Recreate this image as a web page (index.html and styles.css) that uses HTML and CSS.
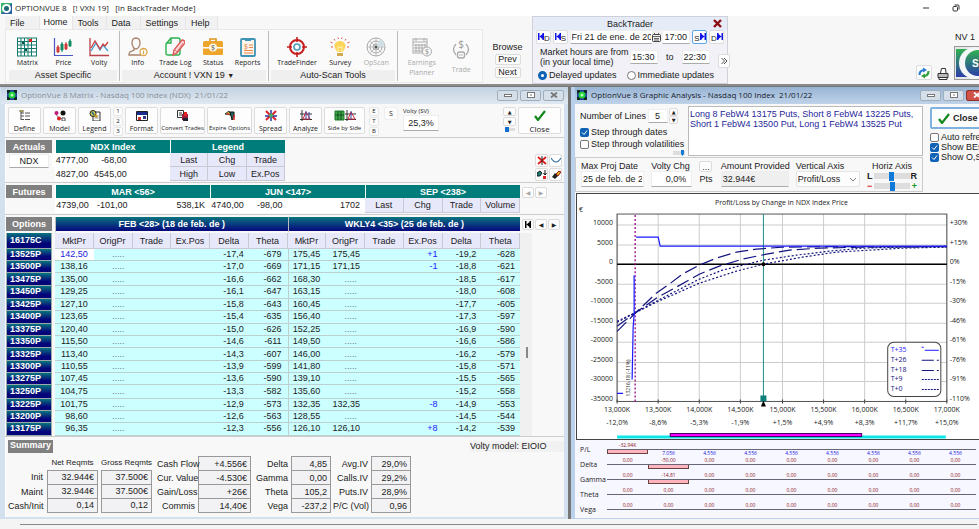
FILE: index.html
```html
<!DOCTYPE html>
<html lang="en">
<head>
  <meta charset="UTF-8">
  <meta name="viewport" content="width=device-width, initial-scale=1.0">
  <title>OPTIONVUE 8</title>
  <link rel="stylesheet" href="styles.css">
</head>
<body>
  <header class="app-title">
    <svg class="app-icon" width="11" height="11" viewBox="0 0 11 11"><rect width="11" height="11" fill="#2c5f9e"/><path d="M0 11V0h11z" fill="#35b36b"/><circle cx="5.500" cy="5.500" r="4.500" fill="#fff"/><circle cx="5.500" cy="5.500" r="2.500" fill="#1e6b74"/></svg>
    <h1>OPTIONVUE 8 &nbsp; [! VXN 19] &nbsp; [In BackTrader Mode]</h1>
    <div class="app-controls">
      <button aria-label="Minimize"><svg width="8" height="8" viewBox="0 0 8 8"><path d="M1 4h6" stroke="#333"/></svg></button>
      <button aria-label="Restore"><svg width="8" height="8" viewBox="0 0 8 8" fill="none" stroke="#333"><rect x="1" y="2.500" width="4.500" height="4.500" rx="1"/><path d="M2.500 1h3.500q1 0 1 1v3.500"/></svg></button>
    </div>
  </header>

  <div class="ribbon">
    <div class="ribbon-main">
      <nav class="tabs">
        <a href="#">File</a>
        <a href="#" class="active">Home</a>
        <a href="#">Tools</a>
        <a href="#">Data</a>
        <a href="#">Settings</a>
        <a href="#">Help</a>
      </nav>
      <div class="groups">
        <section class="group group-asset">
          <div class="tools">
            <button class="tool"><svg width="20" height="20" viewBox="0 0 20 20"><rect x=".5" y="1" width="19" height="18" fill="#fff" stroke="#137a6c"/><path d="M4 1v18M7.500 1v18M11 1v18M14.500 1v18M1 4.500h18M1 8h18M1 11.500h18M1 15h18" stroke="#137a6c"/><path d="M5 5h2v2h-2zM8 12h2v2h-2z" fill="#0b4f46"/><path d="M12 2h3v3h-3z" fill="#d22"/></svg>Matrix</button>
            <button class="tool"><svg width="20" height="20" viewBox="0 0 20 20" fill="none"><path d="M1.500 1v17.500H20" stroke="#4a55c8" stroke-width="1.200"/><path d="M5 8v8M13 5v8" stroke="#d23b35"/><path d="M9 5v10M17 2v8" stroke="#158a63"/><path d="M4 10h2v5h-2zM12 7h2v5h-2z" fill="#d23b35" stroke="#d23b35"/><path d="M8 7h2v6h-2zM16 4h2v5h-2z" fill="#158a63" stroke="#158a63"/></svg>Price</button>
            <button class="tool"><svg width="20" height="20" viewBox="0 0 20 20" fill="none" stroke-width="1.300"><path d="M1 1v17.500H20" stroke="#b94047"/><path d="M2 14l5-8 4 7 3-5 5 6" stroke="#3c9fd8"/><path d="M2 11l4-7 5 8 3-5 2 2 3-4" stroke="#cf3f3f"/></svg>Volty</button>
          </div>
          <h2>Asset Specific</h2>
        </section>
        <section class="group group-account">
          <div class="tools">
            <button class="tool"><svg width="20" height="20" viewBox="0 0 20 20" fill="none" stroke="#a8806a" stroke-width="1.300"><path d="M8 1c-3 0-4 2-4 5s2 6 4 6 4-3 4-6-1-5-4-5z"/><path d="M6 11v2l-4 2q-1 1-1 3h12"/><circle cx="15.500" cy="15" r="3.500" fill="#fff" stroke="#d9a548"/><path d="M15.500 14v3M15.500 12.500v.8" stroke="#d9a548"/></svg>Info</button>
            <button class="tool"><svg width="20" height="20" viewBox="0 0 20 20" fill="none" stroke-width="1.400"><path d="M6 1h7q2 0 2 2v13q0 2-2 2H3q-2 0-2-2V7zM6 1v5H1" stroke="#28b24c"/><path d="M8 18l1-5 8-10q3 0 3 3l-8 10z" fill="#fbd9d9" stroke="#dc5b5b"/><path d="M10 13l2 2 6-9" stroke="#dc5b5b" stroke-width=".8"/></svg>Trade Log</button>
            <button class="tool"><svg width="20" height="20" viewBox="0 0 20 20"><path d="M7 5V2h6v3" fill="none" stroke="#dd951f" stroke-width="1.600"/><rect y="4" width="20" height="14" rx="1.500" fill="#eda52b"/><path d="M0 10h20v1.500H0z" fill="#fff"/><circle cx="10" cy="10.500" r="4" fill="#fff7e0"/><text x="10" y="13" font-size="7" text-anchor="middle" fill="#555">$</text></svg>Status</button>
            <button class="tool"><svg width="20" height="20" viewBox="0 0 20 20" fill="none"><rect x="3" y="2" width="14" height="17" rx="1" fill="#fdf3e8" stroke="#3f93b6" stroke-width="1.800"/><path d="M7 1h6v3H7z" fill="#3f93b6"/><path d="M11 8h4M11 10.500h4M6 13.500h9M6 16h9" stroke="#e58a4b"/><text x="6" y="12" font-size="7" fill="#e07a30">$</text></svg>Reports</button>
          </div>
          <h2>Account ! VXN 19 <small>▼</small></h2>
        </section>
        <section class="group group-scan">
          <div class="tools">
            <button class="tool"><svg width="20" height="20" viewBox="0 0 20 20" fill="none"><circle cx="10" cy="10" r="7" stroke="#c61f1f" stroke-width="2"/><circle cx="10" cy="10" r="3" stroke="#4b9db8" stroke-width="1.600"/><path d="M10 0v5M10 15v5M0 10h5M15 10h5" stroke="#c61f1f" stroke-width="1.600"/></svg>TradeFinder</button>
            <button class="tool"><svg width="20" height="20" viewBox="0 0 20 20" fill="none"><path d="M10 4c-4 0-5.500 3-5.500 5 0 3 2.500 4 2.500 6h6c0-2 2.500-3 2.500-6 0-2-1.500-5-5.500-5z" fill="#fcd45a"/><path d="M8 9l2 2 2-2v6M8 9v6" stroke="#fff2b4"/><path d="M7 16h6v3H7z" fill="#d0a952"/><path d="M4 2l1 1.500M8 .5l.5 1.500M12 .5l-.5 1.500M16 2l-1 1.500M.5 5l2 1M19.500 5l-2 1M1 10h2M17 10h2" stroke="#e4574f"/></svg>Survey</button>
            <button class="tool" disabled><svg width="20" height="20" viewBox="0 0 20 20" fill="none" stroke="#a8a8a8"><circle cx="10" cy="10" r="9"/><circle cx="10" cy="10" r="6"/><circle cx="10" cy="10" r="3"/><path d="M10 1v18M1 10h18M4 4l12 12M16 4L4 16" stroke-width=".6"/><path d="M10 10L14 2q4 2 5 7z" fill="#cfe0e4" stroke="none"/><circle cx="10" cy="10" r="1.500" fill="#555" stroke="none"/></svg>OpScan</button>
          </div>
          <h2>Auto-Scan Tools</h2>
        </section>
        <section class="group group-trade">
          <div class="tools">
            <button class="tool" disabled><svg width="20" height="20" viewBox="0 0 20 20" fill="none" stroke="#aaa"><rect x="1" y="2" width="14" height="14"/><path d="M1 5h14M4 7v8M7 7v8M10 7v8M13 7v5M2 8h12M2 11h12M2 14h10M4 1v3M12 1v3"/><circle cx="15" cy="14.500" r="4.500" fill="#f9f9f9"/><text x="15" y="17" font-size="7" text-anchor="middle" fill="#888" stroke="none">$</text></svg><span>Earnings<br>Planner</span></button>
            <button class="tool tool-low" disabled><svg width="20" height="20" viewBox="0 0 20 20" fill="none" stroke="#aaa" stroke-width="1.300"><path d="M5 5q-5 5 0 11M15 5q5 5 0 11"/><rect x="6.500" y="13" width="7" height="6" rx="2"/><path d="M8 16h4" stroke-width=".8"/><text x="10" y="9" font-size="10" text-anchor="middle" fill="#999" stroke="none">$</text></svg>Trade</button>
          </div>
        </section>
      </div>
    </div>

    <div class="browse">
      <span>Browse</span>
      <button>Prev</button>
      <button>Next</button>
    </div>

    <form class="backtrader">
      <div class="bt-head"><h2>BackTrader</h2><button type="button" aria-label="Close BackTrader"><svg width="9" height="9" viewBox="0 0 9 9"><path d="M1 1l7 7M8 1L1 8" stroke="#8d0d14" stroke-width="2.400"/></svg></button></div>
      <div class="bt-row">
        <button type="button" class="step"><svg width="6" height="7" viewBox="0 0 6 7" fill="#1414e8"><path d="M0 0h1.500v7H0zM4.500 0H6v7H4.500zM1.500 3.500L4.500 1v5z"/></svg><sub>D</sub></button>
        <button type="button" class="step"><svg width="6" height="7" viewBox="0 0 6 7" fill="#1414e8"><path d="M0 0h1.500v7H0zM4.500 0H6v7H4.500zM1.500 3.500L4.500 1v5z"/></svg><sub>S</sub></button>
        <span class="date-field">
          <input class="field" value="Fri 21 de ene. de 2022" aria-label="Date">
          <button type="button" aria-label="Calendar"><svg width="9" height="9" viewBox="0 0 9 9" fill="none" stroke="#444"><rect x=".5" y="1.500" width="8" height="7" rx="1"/><path d="M1 3.500h7M2.500 0v2M6.500 0v2M2 5.500h5M2 7h5" stroke-width=".8"/></svg></button>
        </span>
        <input class="field field-time" value="17:00" aria-label="Time">
        <button type="button" class="step active"><sub>S</sub><svg width="6" height="7" viewBox="0 0 6 7" fill="#1414e8"><path d="M0 0h1.500v7H0zM4.500 0H6v7H4.500zM4.500 3.500L1.500 1v5z"/></svg></button>
        <button type="button" class="step"><sub>D</sub><svg width="6" height="7" viewBox="0 0 6 7" fill="#1414e8"><path d="M0 0h1.500v7H0zM4.500 0H6v7H4.500zM4.500 3.500L1.500 1v5z"/></svg></button>
      </div>
      <div class="bt-hours">
        <p>Market hours are from<br>(in your local time)</p>
        <input class="field field-time" value="15:30" aria-label="Market open">
        <span>to</span>
        <input class="field field-time" value="22:30" aria-label="Market close">
        <button type="button" class="more" aria-label="More"><svg width="7" height="8" viewBox="0 0 7 8" fill="none" stroke="#555"><path d="M.5 1l3 3-3 3M3 1l3 3-3 3"/></svg></button>
      </div>
      <div class="bt-updates">
        <label><input type="radio" name="updates" checked>Delayed updates</label>
        <label><input type="radio" name="updates">Immediate updates</label>
      </div>
    </form>

    <div class="ribbon-right">
      <button class="refresh" aria-label="Refresh"><svg width="12" height="12" viewBox="0 0 12 12" fill="none" stroke-width="2.200"><path d="M1.500 8q0-5 5-5" stroke="#2b7cd0"/><path d="M10.500 4q0 5-5 5" stroke="#33a13b"/><path d="M5 .5l4 2.500-4 2.500z" fill="#2b7cd0"/><path d="M7 6.500L3 9l4 2.500z" fill="#33a13b"/></svg></button>
      <button class="print" aria-label="Print"><svg width="12" height="12" viewBox="0 0 12 12" fill="#fff" stroke="#333"><path d="M3.500 5L4.500.5h4L9 5"/><path d="M1 5.500h10v4H1z" fill="#bbb"/><path d="M2 9.500h8v2H2z"/></svg></button>
      <div class="brand">
        <span>NV 1</span>
        <svg width="36" height="34" viewBox="0 0 36 34"><defs><linearGradient id="brandFill" x2="0" y2="1"><stop offset="0" stop-color="#31b050"/><stop offset="1" stop-color="#2c3ea8"/></linearGradient></defs><rect width="36" height="34" fill="#999"/><rect x="1" y="1" width="35" height="32" fill="#e4e8ea"/><rect x="2" y="3" width="34" height="28" fill="url(#brandFill)"/><circle cx="21" cy="17" r="16" fill="#f3f6f6"/><circle cx="24" cy="17" r="13" fill="url(#brandFill)"/><text x="18" y="21" font-size="10" font-weight="bold" fill="#fff">S</text></svg>
      </div>
    </div>
  </div>

  <main class="desktop">
    <section class="window matrix">
      <header class="window-title">
        <svg class="win-icon" width="10" height="10" viewBox="0 0 10 10"><rect width="10" height="10" fill="#243a9c"/><path d="M0 0h3v3H0zM7 0h3v3H7zM0 7h3v3H0zM7 7h3v3H7z" fill="#0c2a20"/><circle cx="5" cy="5" r="3.500" fill="#1fd03e"/><circle cx="5" cy="5" r="1.500" fill="#b6ffb0"/></svg>
        <h2>OptionVue 8 Matrix - Nasdaq 100 Index (NDX) &nbsp;21/01/22</h2>
        <div class="win-controls">
          <button aria-label="Minimize"><svg width="8" height="6" viewBox="0 0 8 6"><rect x=".5" y="2.500" width="7" height="2" fill="#fff" stroke="#777"/></svg></button>
          <button aria-label="Maximize"><svg width="8" height="6" viewBox="0 0 8 6"><rect x=".5" y=".5" width="7" height="5" fill="#fff" stroke="#777"/><path d="M3 3h2" stroke="#777"/></svg></button>
          <button aria-label="Close"><svg width="8" height="6" viewBox="0 0 8 6"><path d="M1 .5l6 5M7 .5l-6 5" stroke="#777" stroke-width="1.800"/></svg></button>
        </div>
      </header>

      <div class="matrix-tools">
        <button class="mtool"><svg width="12" height="11" viewBox="0 0 12 11" fill="none" stroke="#555"><path d="M2 1v9M2 3h3M2 6h3M2 9.500h3M6 3h5M6 6h5M6 9.500h5"/><path d="M1 0h3v2H1z" fill="#e5d320" stroke="#776"/></svg>Define</button>
        <button class="mtool"><svg width="12" height="11" viewBox="0 0 12 11"><path d="M2 4q3 6 7 4" fill="none" stroke="#777"/><circle cx="2.500" cy="3" r="2" fill="#c2187a"/><circle cx="9" cy="3" r="2.500" fill="#111"/><circle cx="5" cy="8.500" r="2" fill="#d22"/><path d="M8 8h3v3H8z" fill="#fff" stroke="#555"/></svg>Model</button>
        <button class="mtool"><svg width="12" height="11" viewBox="0 0 12 11"><path d="M4 2h7v9H4z" fill="#fff" stroke="#333"/><path d="M5.500 6h4M5.500 8h4" stroke="#888"/><circle cx="4" cy="3.500" r="3" fill="#d8cf4a" stroke="#222"/><path d="M3 2l2 3" stroke="#2a6d90" stroke-width="1.500"/><path d="M6 5l2 2" stroke="#c90" stroke-width="2"/></svg>Legend</button>
        <div class="stack"><button>1</button><button>2</button><button>3</button></div>
        <button class="mtool"><svg width="12" height="11" viewBox="0 0 12 11"><path d="M.5 1.500h11v9H.5z" fill="#fff" stroke="#222"/><path d="M1 2h10v3H1z" fill="#1d2b8c"/><path d="M2 7h3v3H2z" fill="#c33"/><path d="M7 6h3v3H7z" fill="#338"/></svg>Format</button>
        <button class="mtool mtool-wide"><svg width="12" height="11" viewBox="0 0 12 11"><path d="M.5.500h6v7H.5z" fill="#fff" stroke="#333"/><path d="M2 3h3M2 5h3" stroke="#333"/><path d="M5 4h6v6H5z" fill="#9a1f3f"/><path d="M7 2h3v4H7z" fill="#e02424"/><path d="M6 8h5v3H6z" fill="#223"/></svg>Convert Trades</button>
        <button class="mtool mtool-wide"><svg width="12" height="11" viewBox="0 0 12 11"><path d="M1 4l4-3 2 4z" fill="#dcc428" stroke="#333"/><path d="M6 2h4v5L8 10z" fill="#22655d" stroke="#111"/><path d="M10 5v5" stroke="#d22" stroke-width="1.500"/><circle cx="4" cy="4" r="1" fill="#d33"/></svg>Expire Options</button>
        <button class="mtool"><svg width="12" height="11" viewBox="0 0 12 11"><path d="M1 1l4 4M11 1L7 5M1 10l4-4M11 10L7 6" stroke="#d9202c" stroke-width="2"/><path d="M6 0v4M0 6h4M8 6h4M6 7v4" stroke="#25379c" stroke-width="1.500"/><circle cx="6" cy="5.500" r="2" fill="#46ae60"/></svg>Spread</button>
        <button class="mtool"><svg width="12" height="11" viewBox="0 0 12 11" fill="none"><path d="M2 0v11M0 9.500h12M0 4h12" stroke="#333"/><path d="M3 9l3-7 4 7z" stroke="#d5293d"/><path d="M6 1v8M9 2v7" stroke="#3343a6"/></svg>Analyze</button>
        <button class="mtool mtool-side"><svg width="22" height="11" viewBox="0 0 22 11" fill="none"><path d="M1 1h9v9H1z" fill="#40a74a" stroke="#1f7a2c"/><path d="M4 1v9M7 1v9M1 5h9" stroke="#0d4f1a"/><path d="M13 0v11M11 9.500h11M11 4h11" stroke="#333"/><path d="M14 9l3-7 4 7z" stroke="#d5293d"/><path d="M17 1v8" stroke="#3343a6"/></svg>Side by Side</button>
        <div class="stack stack-etb"><button>E</button><button>T</button><button>B</button></div>
        <button class="key-s">S</button>
        <label class="volty">Volty (SV)<input class="field" value="25,3%"></label>
        <div class="spin matrix-spin">
          <button aria-label="Up">▲</button>
          <button aria-label="Down">▼</button>
          <svg width="10" height="5" viewBox="0 0 10 5"><path d="M0 1h10v3H0z" fill="#ddd"/><path d="M0 0h4v5H0z" fill="#0f6fd0"/></svg>
        </div>
        <button class="close"><svg width="12" height="11" viewBox="0 0 12 11" fill="none"><path d="M1 6l3 4 7-9" stroke="#14891d" stroke-width="2.200"/></svg>Close</button>
      </div>

      <div class="row actuals">
        <table class="quotes">
          <colgroup><col class="col-label"><col class="col-gap"></colgroup>
          <thead><tr><th class="tag">Actuals</th><td></td><th colspan="3" class="teal">NDX Index</th><th colspan="3" class="teal">Legend</th></tr></thead>
          <tbody>
            <tr><td rowspan="2" class="top"><button class="field symbol">NDX</button></td><td></td><td>4777,00</td><td>-68,00</td><td class="plain"></td><th class="cap">Last</th><th class="cap">Chg</th><th class="cap">Trade</th></tr>
            <tr><td></td><td>4827,00</td><td>4545,00</td><td class="plain"></td><th class="cap">High</th><th class="cap">Low</th><th class="cap">Ex.Pos</th></tr>
          </tbody>
        </table>
        <div class="icon-pad">
          <button aria-label="Delete"><svg width="10" height="9" viewBox="0 0 10 9"><path d="M1 1l8 7M9 1L1 8" stroke="#e21d1d" stroke-width="1.800"/><path d="M5 0v9" stroke="#222"/></svg></button>
          <button aria-label="Curve"><svg width="10" height="9" viewBox="0 0 10 9"><path d="M0 2q5 8 10 0" fill="none" stroke="#26669c" stroke-width="1.200"/></svg></button>
          <button aria-label="Move"><svg width="10" height="9" viewBox="0 0 10 9"><path d="M0 3l3-2 2 2-2 3H0z" fill="#17766f" stroke="#222"/><path d="M8 0v5M6.500 3l1.500 2 1.500-2" stroke="#111" fill="none"/><path d="M6 6h3v3H6z" fill="#d22"/></svg></button>
          <button aria-label="Clear"><svg width="10" height="9" viewBox="0 0 10 9"><path d="M1 7l3-4 3 3-3 3z" fill="#222"/><path d="M5 4l3-3 2 1-3 4z" fill="#d6b520" stroke="#911"/></svg></button>
        </div>
      </div>

      <div class="row futures">
        <table class="quotes">
          <colgroup><col class="col-label"><col class="col-gap"></colgroup>
          <thead><tr><th class="tag">Futures</th><td></td><th colspan="4" class="teal">MAR &lt;56&gt;</th><th colspan="4" class="teal">JUN &lt;147&gt;</th><th colspan="4" class="teal">SEP &lt;238&gt;</th></tr></thead>
          <tbody><tr><td></td><td></td><td>4739,00</td><td>-101,00</td><td class="plain"></td><td>538,1K</td><td>4740,00</td><td>-98,00</td><td class="plain"></td><td>1702</td><th class="cap">Last</th><th class="cap">Chg</th><th class="cap">Trade</th><th class="cap">Volume</th></tr></tbody>
        </table>
        <div class="pager"><button disabled aria-label="Previous">◀</button><button disabled aria-label="Next">▶</button></div>
      </div>

      <div class="row options">
        <table class="quotes chain">
          <colgroup><col class="col-label"><col class="col-gap"></colgroup>
          <thead>
            <tr><th class="tag">Options</th><td></td><th colspan="6" class="navy">FEB &lt;28&gt; (18 de feb. de )</th><th colspan="6" class="navy">WKLY4 &lt;35&gt; (25 de feb. de )</th></tr>
            <tr class="caps"><th class="strike">16175C</th><td></td><th>MktPr</th><th>OrigPr</th><th>Trade</th><th>Ex.Pos</th><th>Delta</th><th>Theta</th><th>MktPr</th><th>OrigPr</th><th>Trade</th><th>Ex.Pos</th><th>Delta</th><th>Theta</th></tr>
          </thead>
          <tbody id="chainBody"></tbody>
        </table>
        <div class="chain-side">
          <div class="pager"><button aria-label="First"><svg width="6" height="7" viewBox="0 0 6 7"><path d="M0 0h1.500v7H0zM4.500 0H6v7H4.500zM1.500 3.500L4.500 1v5z"/></svg></button><button aria-label="Previous">◀</button><button aria-label="Next">▶</button></div>
          <div class="track"><span></span></div>
        </div>
      </div>

      <div class="summary">
        <div class="summary-head"><h3 class="tag">Summary</h3><span>Volty model: EIOIO</span></div>
        <div class="summary-tables">
          <table class="reqs">
            <tr><td></td><th>Net Reqmts</th><th>Gross Reqmts</th></tr>
            <tr><th>Init</th><td>32.944€</td><td>37.500€</td></tr>
            <tr><th>Maint</th><td>32.944€</td><td>37.500€</td></tr>
            <tr><th>Cash/Init</th><td>0,14</td><td>0,12</td></tr>
          </table>
          <table class="cash">
            <tr><th>Cash Flow</th><td>+4.556€</td></tr>
            <tr><th>Cur. Value</th><td>-4.530€</td></tr>
            <tr><th>Gain/Loss</th><td>+26€</td></tr>
            <tr><th>Commis</th><td>14,40€</td></tr>
          </table>
          <table class="risk">
            <tr><th>Delta</th><td>4,85</td></tr>
            <tr><th>Gamma</th><td>0,00</td></tr>
            <tr><th>Theta</th><td>105,2</td></tr>
            <tr><th>Vega</th><td>-237,2</td></tr>
          </table>
          <table class="risk">
            <tr><th>Avg.IV</th><td>29,0%</td></tr>
            <tr><th>Calls.IV</th><td>29,2%</td></tr>
            <tr><th>Puts.IV</th><td>28,9%</td></tr>
            <tr><th>P/C (Vol)</th><td>0,96</td></tr>
          </table>
        </div>
      </div>
    </section>

    <section class="window analysis">
      <header class="window-title">
        <svg class="win-icon" width="10" height="10" viewBox="0 0 10 10"><rect width="10" height="10" fill="#243a9c"/><path d="M0 0h3v3H0zM7 0h3v3H7zM0 7h3v3H0zM7 7h3v3H7z" fill="#0c2a20"/><circle cx="5" cy="5" r="3.500" fill="#1fd03e"/><circle cx="5" cy="5" r="1.500" fill="#b6ffb0"/></svg>
        <h2>OptionVue 8 Graphic Analysis - Nasdaq 100 Index &nbsp;21/01/22</h2>
        <div class="win-controls">
          <button aria-label="Minimize"><svg width="8" height="6" viewBox="0 0 8 6"><rect x=".5" y="2.500" width="7" height="2" fill="#fff" stroke="#777"/></svg></button>
          <button aria-label="Maximize"><svg width="8" height="6" viewBox="0 0 8 6"><rect x=".5" y=".5" width="7" height="5" fill="#fff" stroke="#777"/><path d="M3 3h2" stroke="#777"/></svg></button>
          <button class="danger" aria-label="Close"><svg width="8" height="6" viewBox="0 0 8 6"><path d="M1 .5l6 5M7 .5l-6 5" stroke="#fff" stroke-width="1.800"/></svg></button>
        </div>
      </header>

      <div class="setup">
        <div class="setup-left">
          <div class="top-row">
            <div class="line-options">
              <div class="lines-row">
                <label for="lineCount">Number of Lines</label>
                <input class="field" id="lineCount" value="5">
                <div class="spin"><button aria-label="More lines">▲</button><button aria-label="Fewer lines">▼</button></div>
              </div>
              <label class="check"><input type="checkbox" checked>Step through dates</label>
              <label class="check"><input type="checkbox">Step through volatilities</label>
              <svg class="mini-slider" width="12" height="6" viewBox="0 0 12 6"><path d="M0 1h12v4H0z" fill="#ddd"/><path d="M8 0h3v4L9.500 6 8 4z" fill="#0f7ad8"/></svg>
            </div>
            <div class="position-text">Long 8 FebW4 13175 Puts, Short 8 FebW4 13225 Puts,<br>Short 1 FebW4 13500 Put, Long 1 FebW4 13525 Put</div>
          </div>
          <div class="param-row">
            <label class="param p-date">Max Proj Date<input class="field" value="25 de feb. de 2022"></label>
            <label class="param p-volty">Volty Chg<input class="field" value="0,0%"></label>
            <div class="param p-pts"><button>...</button><span>Pts</span></div>
            <label class="param p-amount">Amount Provided<input class="field" value="32.944€" readonly></label>
            <label class="param p-axis">Vertical Axis<select class="field"><option>Profit/Loss</option></select></label>
            <div class="param horiz">
              <span>Horiz Axis</span>
              <div class="slide"><b>L</b><input type="range" aria-label="Shift"><b>R</b></div>
              <div class="slide"><b class="minus">−</b><input type="range" aria-label="Zoom"><b class="plus">+</b></div>
            </div>
          </div>
        </div>
        <div class="setup-right">
          <button class="close"><svg width="12" height="11" viewBox="0 0 12 11" fill="none"><path d="M1 6l3 4 7-9" stroke="#14891d" stroke-width="2.200"/></svg>Close</button>
          <label class="check"><input type="checkbox">Auto refresh</label>
          <label class="check"><input type="checkbox" checked>Show BEs</label>
          <label class="check"><input type="checkbox" checked>Show O,S</label>
        </div>
      </div>

      <div class="chart">
        <svg viewBox="0 0 401 244" role="img" aria-label="Profit/Loss by Change in NDX Index Price">
          <text class="chart-title" x="204" y="11" text-anchor="middle">Profit/Loss by Change in NDX Index Price</text>
          <text x="2" y="18">€</text>
          <g id="chartGrid"></g>
          <rect x="40" y="20" width="329" height="187" fill="none" stroke="#555"/>
          <path d="M40 70h329" stroke="#000" stroke-width="1.500"/>
          <path d="M58 21v186" stroke="#8c0a8c" stroke-width="1.300" stroke-dasharray="2 2"/>
          <path d="M186 20v182" stroke="#1b8f87"/>
          <g fill="none" stroke="#14147f" stroke-width="1.200">
            <path d="M40 137L59 118L79 99L92 90L105 80L122 71L139 64L159 58L179 55L205 53L250 52.500L369 52.500" stroke-dasharray="13 5"/>
            <path d="M40 132L59 118L79 104L99 93L122 80L142 72L165 65L189 60L212 56L242 54L285 53L369 52.500" stroke-dasharray="13 5"/>
            <path d="M40 128L59 118L79 107L122 85L145 76L186 66L219 61L252 57L285 54L325 53L369 52" stroke-dasharray="2 2"/>
            <path d="M40 127L59 118L79 108L122 89L159 77L186 70L225 63L259 58L292 56L325 54L369 53" stroke-dasharray="2 2"/>
          </g>
          <path d="M40 199h6M55 185L56 133L57 120L57 81M59 43H81L83 52H369" fill="none" stroke="#1a1aff" stroke-width="1.200"/>
          <rect x="183" y="201" width="6" height="6" fill="#0e807c"/>
          <path d="M186 206l2.500 6h-5z"/>
          <circle cx="186" cy="70" r="2"/>
          <text class="breakeven" x="0" y="0" transform="translate(53 202) rotate(-90)">13216,18 (-11%)</text>
          <rect x="310" y="148" width="53" height="54" rx="6" fill="#fff" stroke="#444"/>
          <g class="legend-text">
            <text x="313" y="158" class="bright">T+35</text><text x="313" y="168">T+26</text><text x="313" y="178">T+18</text><text x="313" y="187">T+9</text><text x="313" y="197">T+0</text>
          </g>
          <g stroke="#14147f"><path d="M344 153h2M347 156h14" stroke="#1a1aff"/><path d="M344 166h17M344 176h17" stroke-dasharray="12 3"/><path d="M344 185h17M344 195h17" stroke-dasharray="2 1"/></g>
          <path d="M40 242.500h328" stroke="#0ee6e6" stroke-width="3"/>
          <rect x="93" y="239" width="191" height="3" fill="#f0f" stroke="#406"/>
        </svg>
      </div>

      <table class="greeks"><tbody id="greeksBody"></tbody></table>
    </section>
  </main>
  <footer class="status-bar"></footer>

  <script>
    // strike, near month (mkt, delta, theta), weekly (mkt, orig, position, delta, theta)
    const chain = [
      ['13525P', '142,50', '-17,4', '-679', '175,45', '175,45', '+1', '-19,2', '-628'],
      ['13500P', '138,16', '-17,0', '-669', '171,15', '171,15', '-1', '-18,8', '-621'],
      ['13475P', '135,00', '-16,6', '-662', '168,30', '', '', '-18,5', '-617'],
      ['13450P', '129,25', '-16,1', '-647', '163,15', '', '', '-18,0', '-608'],
      ['13425P', '127,10', '-15,8', '-643', '160,45', '', '', '-17,7', '-605'],
      ['13400P', '123,65', '-15,4', '-635', '156,40', '', '', '-17,3', '-597'],
      ['13375P', '120,40', '-15,0', '-626', '152,25', '', '', '-16,9', '-590'],
      ['13350P', '115,50', '-14,6', '-611', '149,50', '', '', '-16,6', '-586'],
      ['13325P', '113,40', '-14,3', '-607', '146,00', '', '', '-16,2', '-579'],
      ['13300P', '110,55', '-13,9', '-599', '141,80', '', '', '-15,8', '-571'],
      ['13275P', '107,45', '-13,6', '-590', '139,10', '', '', '-15,5', '-565'],
      ['13250P', '104,75', '-13,3', '-582', '135,60', '', '', '-15,2', '-558'],
      ['13225P', '101,75', '-12,9', '-573', '132,35', '132,35', '-8', '-14,9', '-553'],
      ['13200P', '98,60', '-12,6', '-563', '128,55', '', '', '-14,5', '-544'],
      ['13175P', '96,35', '-12,3', '-556', '126,10', '126,10', '+8', '-14,2', '-539']
    ];
    const orig = value => value ? `<td>${value}</td>` : '<td class="dots">.....</td>';
    document.getElementById('chainBody').innerHTML = chain.map(r =>
      `<tr><th class="strike">${r[0]}</th><td></td><td>${r[1]}</td>${orig('')}<td></td><td></td><td>${r[2]}</td><td>${r[3]}</td>` +
      `<td>${r[4]}</td>${orig(r[5])}<td></td><td class="pos">${r[6]}</td><td>${r[7]}</td><td>${r[8]}</td></tr>`
    ).join('');

    // chart grid and axis labels
    const prices = ['13,000K', '13,500K', '14,000K', '14,500K', '15,000K', '15,500K', '16,000K', '16,500K', '17,000K'];
    const moves = ['-12,0%', '-8,6%', '-5,3%', '-1,9%', '+1,5%', '+4,9%', '+8,3%', '+11,7%', '+15,0%'];
    const profit = ['10000', '5000', '0', '-5000', '-10000', '-15000', '-20000', '-25000', '-30000', '-35000'];
    const percent = ['+30%', '+15%', '0%', '-15%', '-30%', '-46%', '-61%', '-76%', '-91%', '-110%'];
    let grid = '';
    prices.forEach((price, i) => {
      const x = Math.round(40 + i * 329 / 8);
      grid += `<path d="M${x} 20v187" stroke="#ccc"/><path d="M${x} 205v4" stroke="#333"/>` +
        `<text x="${x}" y="218" text-anchor="middle">${price}</text><text x="${x}" y="230" text-anchor="middle">${moves[i]}</text>`;
    });
    profit.forEach((value, i) => {
      const y = Math.round(31 + i * 176 / 9);
      grid += `<path d="M40 ${y}h329" stroke="#ccc"/>` +
        `<text x="36" y="${y}" text-anchor="end">${value}</text><text x="372" y="${y}">${percent[i]}</text>`;
    });
    document.getElementById('chartGrid').innerHTML = grid;

    // each value sits above its axis line, gains go below it
    const zero = Array(9).fill('0,00');
    const greeks = [
      ['P/L', ['-32,94K', '7.056', '4.556', '4.556', '4.556', '4.556', '4.556', '4.556', '4.556']],
      ['Delta', zero.with(1, '-50,00')],
      ['Gamma', zero.with(1, '-14,81')],
      ['Theta', zero],
      ['Vega', zero]
    ];
    document.getElementById('greeksBody').innerHTML = greeks.map(([name, values]) =>
      `<tr><th>${name}</th>` + values.map(v => {
        const gain = name === 'P/L' && v[0] !== '-';
        const below = gain ? `<span class="gain">${v}</span>` : (v[0] === '-' ? '<span class="bar"></span>' : '');
        return `<td><span class="value">${gain ? '' : v}</span>${below}</td>`;
      }).join('') + '</tr>'
    ).join('');
  </script>
</body>
</html>
```
FILE: styles.css
```css
* {
  box-sizing: border-box;
}

body {
  margin: 0;
  min-height: 100vh;
  display: flex;
  flex-direction: column;
  overflow: hidden;
  background: #f7f7f7;
  color: #222;
  font-family: "Liberation Sans", Arial, sans-serif;
  font-size: 9px;
  line-height: 10px;
}

h1, h2, h3, p {
  margin: 0;
  font-size: inherit;
  font-weight: normal;
}

button, input, select {
  margin: 0;
  padding: 0;
  font: inherit;
  color: inherit;
}

button {
  background: #fdfdfd;
  border: 1px solid #dcdcdc;
  border-radius: 2px;
  white-space: nowrap;
}

svg {
  display: block;
  flex: none;
}

table {
  border-spacing: 0;
}

th, td {
  padding: 0;
  font-weight: normal;
}

.field {
  height: 14px;
  padding: 0 1px;
  background: #fff;
  border: 1px solid #eee;
  border-bottom-color: #aaa;
  border-radius: 1px;
}

input[type="checkbox"], input[type="radio"] {
  flex: none;
  width: 9px;
  height: 9px;
  margin: 0 2px 0 0;
  appearance: none;
  border: 1px solid #777;
  border-radius: 2px;
  background: #fff;
}

input[type="checkbox"]:checked {
  border: 0;
  background: #0f62b5 url("data:image/svg+xml,%3Csvg xmlns='http://www.w3.org/2000/svg' viewBox='0 0 9 9'%3E%3Cpath d='M2 4.500l2 2 3-4' fill='none' stroke='white'/%3E%3C/svg%3E");
}

input[type="radio"] {
  border-radius: 50%;
}

input[type="radio"]:checked {
  border: 3px solid #0f62b5;
}

/* title bar */
.app-title {
  display: flex;
  align-items: center;
  gap: 3px;
  height: 16px;
  padding: 0 19px 0 1px;
  background: #fff;
  font-family: "Open Sans", sans-serif;
  font-size: 8px;
}

.app-controls {
  display: flex;
  gap: 22px;
  margin-left: auto;
}

.app-controls button {
  border: 0;
  background: none;
}

/* ribbon */
.ribbon {
  display: flex;
  height: 70px;
  border-bottom: 2px solid #8b8b8b;
  background: #f7f7f7;
}

.ribbon-main {
  flex: none;
  width: 478px;
  margin-left: 5px;
}

.tabs {
  display: flex;
  height: 13px;
}

.tabs a {
  padding: 2px 7px 0 5px;
  border-right: 1px solid #e6e6e6;
  background: #f1f1f1;
  color: #222;
  text-decoration: none;
}

.tabs a:first-child {
  padding-right: 14px;
}

.tabs a:nth-child(4) {
  padding-right: 9px;
}

.tabs .active {
  padding: 1px 4px 0;
  background: #fafafa;
}

.groups {
  display: flex;
  height: 54px;
  padding: 1px;
  border: 1px solid #e8e8e8;
  background: #fafafa;
}

.group {
  display: flex;
  flex-direction: column;
  justify-content: space-between;
  padding: 0 2px;
  border-right: 1px solid #bbb;
}

.group:last-child {
  border: 0;
}

.group-asset {
  width: 113px;
}

.group-account {
  width: 149px;
}

.group-scan {
  width: 129px;
}

.group-trade {
  width: 83px;
}

.group h2 {
  height: 11px;
  background: #efefef;
  text-align: center;
}

.group small {
  font-size: 7px;
}

.tools {
  display: flex;
  justify-content: space-around;
  padding-top: 6px;
}

.tool {
  display: flex;
  flex-direction: column;
  align-items: center;
  gap: 1px;
  border: 0;
  background: none;
  font-family: "Open Sans", sans-serif;
  font-size: 7px;
}

.tool:disabled {
  color: #aaa;
}

.tool-low {
  gap: 6px;
  padding-top: 2px;
}

.browse {
  display: flex;
  flex-direction: column;
  align-items: center;
  gap: 2px;
  width: 49px;
  padding-top: 26px;
}

.browse button {
  width: 26px;
  height: 11px;
  line-height: 9px;
}

.backtrader {
  flex: none;
  width: 196px;
  border: 1px solid #cfd0d8;
  background: #f1f1f7;
}

.bt-head {
  display: flex;
  align-items: center;
  height: 13px;
  padding: 0 5px 0 14px;
  background: #e5ebf7;
}

.bt-head h2 {
  flex: 1;
  text-align: center;
}

.bt-head button {
  border: 0;
  background: none;
}

.bt-row {
  display: flex;
  justify-content: space-between;
  padding: 0 3px;
}

.step {
  display: flex;
  width: 15px;
  height: 14px;
  padding: 2px 0 0 1px;
}

.step sub {
  align-self: flex-end;
  font-size: 8px;
  line-height: 8px;
}

.step.active {
  border-color: #58a5e8;
}

.date-field {
  display: flex;
  width: 91px;
  background: #fff;
}

.date-field .field {
  min-width: 0;
  flex: 1;
  border-right: 0;
}

.date-field button {
  border: 0;
  background: #eee;
}

.field-time {
  width: 28px;
}

.bt-hours {
  display: flex;
  align-items: center;
  gap: 8px;
  padding: 2px 3px 0 7px;
}

.bt-hours p {
  flex: none;
  width: 82px;
  white-space: nowrap;
}

.more {
  width: 12px;
  height: 14px;
  margin: 8px 0 0 auto;
  padding: 0 2px;
}

.bt-updates {
  display: flex;
  gap: 10px;
  padding: 2px 5px;
}

.bt-updates label, .check {
  display: flex;
  align-items: center;
  white-space: nowrap;
}

.ribbon-right {
  display: flex;
  align-items: flex-end;
  gap: 5px;
  margin: 0 -11px 4px auto;
}

.ribbon-right .refresh {
  width: 16px;
  height: 15px;
  padding: 0 1px;
}

.ribbon-right .print {
  border: 0;
  background: none;
}

.brand span {
  display: block;
  padding: 0 0 4px 1px;
}

/* windows */
.desktop {
  display: grid;
  grid-template-columns: minmax(0, 7fr) minmax(0, 5fr);
  flex: 1;
  background: #777;
}

.window {
  min-width: 0;
  margin-top: 1px;
  border: solid #d3e1ef;
  border-width: 0 4px 2px;
  background: #f8f8f8;
}

.matrix {
  margin-right: 3px;
  border-left-width: 5px;
  box-shadow: inset 1px 0 #fff;
}

.analysis {
  border-color: #b9d1ea;
  border-right: 0;
  border-bottom-width: 1px;
  overflow: hidden;
}

.window-title {
  display: flex;
  align-items: center;
  gap: 4px;
  height: 17px;
  margin: 0 -4px;
  padding: 0 4px 1px 6px;
  background: linear-gradient(#c3d3e2, #dfe8f2);
  color: #8a9099;
  font-family: "Open Sans", sans-serif;
  white-space: nowrap;
}

.window-title h2 {
  font-size: 8px;
}

.analysis .window-title {
  margin-right: -12px;
  background: linear-gradient(#98b4d4, #bfd3e9);
  color: #16202c;
}

.win-controls {
  display: flex;
  gap: 2px;
  margin-left: auto;
}

.win-controls button {
  width: 21px;
  height: 11px;
  padding: 0 6px;
  border-color: #a0adbb;
  background: #d5dfe9;
}

.win-controls .danger {
  background: #cf5147;
  border-color: #8b2f28;
}

/* matrix toolbar */
.matrix-tools {
  display: flex;
  gap: 2px;
  height: 34px;
  padding: 3px;
  border-bottom: 1px solid #ccc;
  font-family: "Open Sans", sans-serif;
  font-size: 7px;
}

.mtool, .close {
  display: flex;
  flex: none;
  flex-direction: column;
  align-items: center;
  gap: 3px;
  width: 33px;
  height: 27px;
  padding-top: 2px;
  line-height: 9px;
}

.mtool-wide {
  width: 45px;
  font-size: 6px;
}

.mtool-side {
  width: 41px;
  font-size: 6px;
}

.stack {
  display: flex;
  flex-direction: column;
  gap: 1px;
}

.stack-etb {
  margin-left: 2px;
}

.stack button {
  width: 10px;
  height: 9px;
  border-color: #e6e6e6;
  font-size: 6px;
  line-height: 7px;
}

.key-s {
  width: 14px;
  height: 13px;
  margin: 0 3px;
  border-color: #eee;
}

.volty {
  width: 36px;
  font-size: 6px;
  line-height: 8px;
}

.volty .field {
  display: block;
  width: 100%;
  height: 16px;
  font-family: "Liberation Sans", Arial, sans-serif;
  font-size: 9px;
  text-align: center;
}

.spin {
  display: flex;
  flex-direction: column;
  align-items: center;
}

.spin button {
  width: 13px;
  height: 9px;
  font-family: "DejaVu Sans", sans-serif;
  font-size: 5px;
  line-height: 6px;
}

.matrix-spin {
  gap: 1px;
  margin-left: auto;
}

.matrix-tools .close {
  width: 43px;
  font-size: 8px;
}

/* quote tables */
.row {
  display: flex;
  padding: 2px 0 0 1px;
  border-bottom: 1px solid #ccc;
}

.quotes {
  flex: 1;
  table-layout: fixed;
  width: 100%;
}

.quotes td {
  height: 12px;
  padding-right: 5px;
  text-align: right;
  line-height: 11px;
}

.col-label {
  width: 46px;
}

.col-gap {
  width: 3px;
}

.tag {
  height: 13px;
  background: #808080;
  color: #fff;
  font-weight: bold;
  text-align: center;
}

.teal {
  background: #007d7b;
  color: #fff;
  font-weight: bold;
  border-left: 1px solid #fff;
}

.navy {
  background: linear-gradient(#0b7480, #06067c);
  color: #fff;
  font-weight: bold;
  border-left: 1px solid #bbb;
}

.cap, .caps th:not(.strike) {
  height: 13px;
  border: solid #c9c9d4;
  border-width: 0 1px 1px 0;
  background: #e8e8fb;
  text-align: center;
}

.futures .cap {
  height: 15px;
}

.actuals, .futures {
  justify-content: space-between;
}

.actuals {
  height: 45px;
}

.actuals .quotes {
  flex: none;
  width: 279px;
  height: 41px;
}

.actuals tbody td:nth-child(n+2), .futures tbody td:nth-child(n+3) {
  background: #fff;
}

.actuals .top {
  padding: 1px 3px;
  vertical-align: top;
}

.symbol {
  width: 100%;
}

.icon-pad {
  display: grid;
  grid-template-columns: 13px 13px;
  gap: 1px;
  align-content: end;
  padding: 0 2px 1px 0;
}

.icon-pad button {
  height: 13px;
  padding: 0 1px;
}

.futures {
  height: 32px;
}

.futures .quotes {
  height: 28px;
}

.pager {
  display: flex;
  flex: none;
  gap: 1px;
  width: 44px;
  padding: 2px 0 0 2px;
}

.pager button {
  width: 12px;
  height: 11px;
  padding: 0 2px;
  font-family: "DejaVu Sans", sans-serif;
  font-size: 6px;
  line-height: 8px;
}

.pager button:disabled {
  color: #aaa;
}

.options {
  height: 222px;
}

.chain thead tr:first-child > * {
  height: 16px;
}

.chain thead th.tag, .chain thead th.navy {
  border-bottom: 2px solid #f8f8f8;
}

.chain .caps > * {
  height: 16px;
}

.chain .strike {
  border: solid #9aa;
  border-width: 0 1px 1px;
  background: linear-gradient(#08747f, #05057a 70%);
  color: #fff;
  font-weight: bold;
  text-align: left;
  padding-left: 3px;
  line-height: 11px;
}

.chain tbody td:nth-child(n+3) {
  background: #ccffff;
  border-bottom: 1px solid #bcd0d0;
}

.chain tbody td:nth-child(9) {
  border-left: 1px solid #bcd0d0;
}

.chain tbody tr:nth-child(3n) td {
  height: 13px;
}

.chain tbody td:nth-child(3), .chain tbody td:nth-child(8), .chain tbody td:nth-child(9) {
  padding-right: 6px;
}

.chain tbody tr:first-child td:nth-child(3) {
  background: #fff;
  color: #2020e0;
}

.chain .dots {
  padding-right: 8px;
  color: #678;
}

.chain .pos {
  color: #2020ff;
}

.chain-side {
  display: flex;
  flex-direction: column;
  justify-content: space-between;
}

.track {
  display: flex;
  flex-direction: column;
  justify-content: center;
  width: 12px;
  height: 203px;
  background: #f0f0f0;
}

.track span {
  width: 2px;
  height: 11px;
  margin: 36px 0 0 6px;
  background: #888;
}

/* summary */
.summary {
  padding: 3px 0 4px;
}

.summary-head {
  display: flex;
  justify-content: space-between;
  padding-left: 3px;
}

.summary-head .tag {
  width: 45px;
}

.summary-head span {
  width: 94px;
  height: 11px;
  margin-top: 1px;
  background: #f1f1f1;
}

.summary-tables {
  display: flex;
  gap: 2px;
  margin-top: 3px;
}

.summary-tables th {
  padding-right: 3px;
  text-align: right;
  white-space: nowrap;
}

.summary-tables td {
  height: 14px;
  padding-right: 3px;
  text-align: right;
}

.summary-tables table {
  table-layout: fixed;
  border-collapse: collapse;
}

.summary-tables th + td, .summary-tables td + td {
  border: 1px solid #999;
  background: #f2f2f5;
}

.summary-tables .reqs {
  width: 150px;
  border-collapse: separate;
  border-spacing: 3px 0;
}

.reqs th {
  padding-right: 1px;
}

.reqs tr > :nth-child(n+2) {
  width: 51px;
}

.reqs tr:nth-child(n+3) td {
  border-top: 0;
}

.summary-tables .reqs td + th, .summary-tables .reqs th + th {
  padding: 0;
  font-size: 8px;
  text-align: center;
}

.cash {
  width: 94px;
}

.cash td {
  width: 52px;
}

.risk {
  width: 78px;
}

.risk td {
  width: 39px;
}

/* graphic analysis */
.setup {
  display: flex;
  gap: 7px;
  padding: 2px 0 1px;
}

.setup-left {
  flex: none;
  width: 348px;
}

.top-row {
  display: flex;
  height: 50px;
}

.line-options {
  flex: none;
  width: 113px;
  padding-left: 5px;
}

.lines-row {
  display: flex;
  align-items: center;
  justify-content: space-between;
  height: 20px;
  padding-right: 10px;
}

.lines-row .field {
  width: 20px;
  text-align: center;
}

.lines-row .spin button {
  width: 9px;
  height: 8px;
}

.line-options .check {
  height: 12px;
}

.mini-slider {
  margin-left: 93px;
}

.position-text {
  flex: 1;
  padding: 2px 1px;
  border: 1px solid #bbb;
  background: #fff;
  color: #26269a;
  white-space: nowrap;
}

.param-row {
  display: flex;
  justify-content: space-between;
  height: 35px;
  margin-top: 1px;
  padding: 3px 5px;
  border: 1px solid #ccc;
}

.param {
  flex: none;
  white-space: nowrap;
}

.param .field {
  display: block;
  width: 100%;
  height: 16px;
}

.p-date {
  width: 63px;
}

.p-volty {
  width: 41px;
}

.p-volty .field {
  padding-right: 5px;
  text-align: right;
}

.p-pts {
  display: flex;
  flex-direction: column;
  gap: 2px;
  width: 14px;
}

.p-pts button {
  width: 13px;
  height: 11px;
  line-height: 6px;
}

.p-amount {
  width: 68px;
}

.p-amount .field {
  background: #efefef;
}

.p-axis {
  width: 64px;
}

.param select.field {
  appearance: none;
  border-color: #e4e4e4;
  background: #fdfdfd url("data:image/svg+xml,%3Csvg xmlns='http://www.w3.org/2000/svg' viewBox='0 0 8 8'%3E%3Cpath d='M1 3l3 3 3-3' fill='none' stroke='gray'/%3E%3C/svg%3E") right 2px center / 8px no-repeat;
}

.horiz {
  width: 50px;
  text-align: center;
}

.slide {
  display: flex;
  align-items: center;
  justify-content: space-between;
  height: 10px;
}

.slide input {
  width: 36px;
  height: 6px;
  appearance: none;
  background: #ddd;
}

.slide input::-webkit-slider-thumb {
  appearance: none;
  width: 5px;
  height: 9px;
  background: #0f7ad8;
}

.minus {
  color: #d22;
}

.plus {
  color: #1a9a22;
}

.setup-right {
  flex: none;
  width: 62px;
  padding-top: 1px;
}

.setup-right .close {
  flex-direction: row;
  gap: 3px;
  width: 62px;
  height: 22px;
  margin-bottom: 3px;
  padding: 0 6px;
  border: 2px solid #7fb2de;
  font-weight: bold;
}

.setup-right .check {
  height: 10px;
}

.chart {
  margin-left: 1px;
  border: solid #444;
  border-width: 1px 0 1px 1px;
  background: #fff;
}

.chart svg {
  width: 100%;
}

.chart text {
  fill: #222;
  font-family: "Open Sans", sans-serif;
  font-size: 7px;
}

.chart .legend-text text {
  fill: #14147f;
}

.chart .legend-text .bright {
  fill: #1a1aff;
}

.chart .breakeven {
  font-size: 5px;
}

.greeks {
  width: 100%;
  padding: 2px 3px 0 5px;
  background: #f7f7ff;
  table-layout: fixed;
  font-family: "Open Sans", sans-serif;
  font-size: 5px;
  line-height: 6px;
}

.greeks th {
  width: 27px;
  font-size: 7px;
  text-align: left;
  line-height: 15px;
}

.greeks td {
  height: 15px;
  vertical-align: top;
  text-align: center;
}

.greeks span {
  display: block;
}

.value {
  height: 8px;
  border-bottom: 1px solid #667;
  color: #8c1220;
}

.gain {
  color: #2020e0;
}

.bar {
  height: 4px;
  border: 1px solid #644;
  border-top: 0;
  background: #ffb3bd;
}

.status-bar {
  height: 10px;
  padding: 5px 2px 0 20px;
  background: #f4f4f4;
}

.status-bar::before {
  content: "";
  display: block;
  height: 1px;
  background: #888;
}
```
